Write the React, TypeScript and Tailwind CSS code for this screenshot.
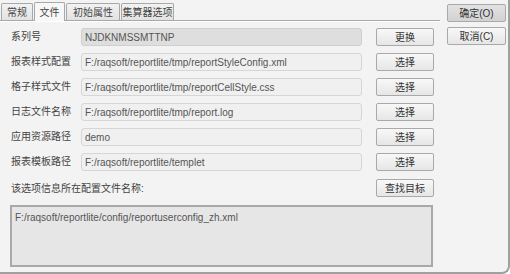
import React from "react";

const font = { fontFamily: '"Liberation Sans", "Noto Sans CJK SC", sans-serif' };

function Btn({ children, className = "" }: { children: React.ReactNode; className?: string }) {
  return (
    <div
      className={`flex items-center justify-center h-[18px] border border-[#a9a9a9] rounded-[2px] bg-gradient-to-b from-[#f8f8f8] to-[#e6e6e6] text-[10px] text-[#333] whitespace-nowrap ${className}`}
    >
      {children}
    </div>
  );
}

function Row({ label, value, btn, disabled }: { label: string; value: string; btn: string; disabled?: boolean }) {
  return (
    <div className="flex items-center h-[18px] mb-[7px]">
      <div className="w-[70px] text-[10px] text-[#444] leading-none whitespace-nowrap">{label}</div>
      <div
        className={`w-[281px] h-[18px] flex items-center pl-[3px] rounded-[3px] border text-[10px] text-[#555] whitespace-nowrap ${
          disabled ? "bg-[#dedede] border-[#cfcfcf]" : "bg-[#f0f0f0] border-[#d6d6d6]"
        }`}
      >
        {value}
      </div>
      <Btn className="ml-[14px] w-[58px]">{btn}</Btn>
    </div>
  );
}

function Tab({ label, active, w }: { label: string; active?: boolean; w: string }) {
  return (
    <div
      className={`${w} flex items-center justify-center border border-b-0 border-[#a8a8a8] rounded-t-[2px] text-[10px] text-[#444] whitespace-nowrap ${
        active ? "h-[19px] bg-[#f7f7f7] -mb-[1px] z-10" : "h-[17px] bg-gradient-to-b from-[#f2f2f2] to-[#e2e2e2]"
      }`}
    >
      {label}
    </div>
  );
}

export default function App() {
  return (
    <div
      style={font}
      className="flex w-[510px] h-[274px] bg-[#f3f3f3] border-r-2 border-b-2 border-[#a0a0a0] rounded-br-[8px] overflow-hidden"
    >
      <div className="w-[440px] flex flex-col">
        <div className="flex items-end h-[21px] pl-[1px] gap-[1px] border-b border-[#a8a8a8] shadow-[0_1px_0_#ffffff]">
          <Tab label="常规" w="w-[32px]" />
          <Tab label="文件" w="w-[31px]" active />
          <Tab label="初始属性" w="w-[54px]" />
          <Tab label="集算器选项" w="w-[53px]" />
        </div>
        <div className="pt-[7px] pl-[11px]">
          <Row label="系列号" value="NJDKNMSSMTTNP" btn="更换" disabled />
          <Row label="报表样式配置" value="F:/raqsoft/reportlite/tmp/reportStyleConfig.xml" btn="选择" />
          <Row label="格子样式文件" value="F:/raqsoft/reportlite/tmp/reportCellStyle.css" btn="选择" />
          <Row label="日志文件名称" value="F:/raqsoft/reportlite/tmp/report.log" btn="选择" />
          <Row label="应用资源路径" value="demo" btn="选择" />
          <Row label="报表模板路径" value="F:/raqsoft/reportlite/templet" btn="选择" />
          <div className="flex items-center h-[18px] mt-[8px]">
            <div className="w-[365px] text-[10px] text-[#444]">该选项信息所在配置文件名称:</div>
            <Btn className="w-[58px]">查找目标</Btn>
          </div>
          <div className="-ml-[1px] mt-[8px] w-[423px] h-[62px] bg-[#e6e6e6] border-2 border-[#a9a9a9] pl-[3px] pt-[3px] text-[10px] text-[#555]">
            F:/raqsoft/reportlite/config/reportuserconfig_zh.xml
          </div>
        </div>
      </div>
      <div className="flex flex-col pl-[7px] pt-[4px] gap-[5px]">
        <Btn className="w-[59px] !from-[#e2e2e2] !to-[#d2d2d2]">确定(O)</Btn>
        <Btn className="w-[59px]">取消(C)</Btn>
      </div>
    </div>
  );
}
